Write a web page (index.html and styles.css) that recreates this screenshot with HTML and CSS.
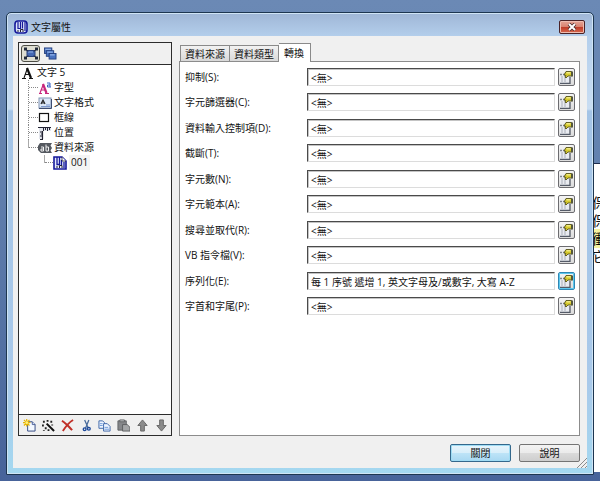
FILE: index.html
```html
<!DOCTYPE html>
<html lang="zh-Hant">
<head>
    <meta charset="UTF-8">
    <title>文字屬性</title>
    <link rel="stylesheet" href="styles.css">
</head>
<body>
<!-- shared icons -->
<svg class="sprite" aria-hidden="true">
    <symbol id="i-app" viewBox="0 0 14 14">
        <rect x="1" y="1" width="12" height="12" rx="3" fill="#dfe5fb" stroke="#15189a" stroke-width="1.600"/>
        <path d="M4 2v6.500h2.500V2M8.500 2v6.500M11 2v9" fill="none" stroke="#15189a" stroke-width="1.200"/>
        <path d="M3 11h2M6.500 12V9.500h2.500V12" fill="none" stroke="#223" stroke-width="1"/>
    </symbol>
    <symbol id="i-doc" viewBox="0 0 14 14">
        <path d="M1 1h8l4 4v8H1z" fill="#e6ebfd" stroke="#15189a" stroke-width="1.600"/>
        <path d="M4 1v7.500h2.500V1M8.500 4v5M11 6v6" fill="none" stroke="#15189a" stroke-width="1.300"/>
        <path d="M9 1v4h4" fill="#fff" stroke="#223" stroke-width=".8"/>
        <path d="M3 11h2M6.500 12V9.500H9V12" fill="none" stroke="#223"/>
    </symbol>
    <symbol id="i-prop" viewBox="0 0 15 15">
        <path d="M1 4h9v9H1z" fill="#e9ebf0"/>
        <path d="M1 4.500h5" stroke="#7f848e" stroke-width="1.400" stroke-dasharray="2 1"/>
        <path d="M2 7h6M2 9h6M2 11h6" stroke="#a8adb8" stroke-dasharray="2 1"/>
        <path d="M1 13.300h10V7" fill="none" stroke="#555b68" stroke-width="1.300"/>
        <path d="M5 5l2-3.500h5.500v4.500H9L7 8 6 7l1-1.500z" fill="#d6ca2c" stroke="#55511c" stroke-width=".9"/>
        <path d="M7.500 2.800h4" stroke="#f8f29a" stroke-width="1.200"/>
        <path d="M12 1.500h2v5h-2z" fill="#55573c"/>
    </symbol>
</svg>

<div class="page-behind" aria-hidden="true">保<br>保<br><mark>衝</mark><br>它</div>

<div class="dialog" role="dialog" aria-labelledby="title">
    <div class="titlebar">
        <svg class="icon"><use href="#i-app"/></svg>
        <h1 id="title">文字屬性</h1>
        <button class="close" type="button" aria-label="關閉視窗">
            <svg viewBox="0 0 10 8"><path d="M2 1l6 6M8 1L2 7" stroke="#4b2a2a" stroke-width="3.600"/><path d="M2 1l6 6M8 1L2 7" stroke="#fff" stroke-width="2"/></svg>
        </button>
    </div>

    <div class="client">
        <div class="columns">
            <div class="side">
                <div class="side-top">
                    <button class="mode active" type="button" aria-label="物件">
                        <svg viewBox="0 0 14 12"><rect x="3" y="3" width="8" height="6" fill="#4468b4" stroke="#28407c"/><path d="M4 4.500h5" stroke="#8fb0e8"/><path d="M1 1l3 3M13 1l-3 3M1 11l3-3M13 11l-3-3" stroke="#222"/><path d="M0 0h3v3H0zM11 0h3v3h-3zM0 9h3v3H0zM11 9h3v3h-3z" fill="#222b3c"/></svg>
                    </button>
                    <button class="mode" type="button" aria-label="圖層">
                        <svg viewBox="0 0 14 14"><g fill="#4a73c0" stroke="#1f3a7a" stroke-width=".9"><rect x="1" y="1" width="8" height="6"/><rect x="3" y="4" width="8" height="6"/><rect x="6" y="7" width="7.500" height="6"/></g><path d="M2 2.500h6M4 5.500h6M7 8.500h5" stroke="#a9c6f4"/></svg>
                    </button>
                </div>
                <ul class="tree">
                    <li>
                        <div class="node root">
                            <svg viewBox="0 0 14 14" class="icon"><path d="M6.500 2L3 12M4 8.500h5" fill="none" stroke="#111" stroke-width="1.100"/><path d="M6 2l4 10" stroke="#111" stroke-width="2.200"/><path d="M1 12.500h4M8 12.500h4" stroke="#111"/></svg>
                            <span>文字 5</span>
                        </div>
                        <ul>
                            <li><div class="node">
                                <svg viewBox="0 0 14 14" class="icon"><path d="M5.500 3L2 12M3 9h4" fill="none" stroke="#c8267c" stroke-width="1.200"/><path d="M5 3l3.500 9" stroke="#c8267c" stroke-width="2.200"/><path d="M1 12.500h3M7 12.500h4" stroke="#c8267c"/><path d="M9 2h3v4M12 4H9.500v2H13" fill="none" stroke="#3b64c4"/></svg>
                                <span>字型</span></div></li>
                            <li><div class="node">
                                <svg viewBox="0 0 14 14" class="icon"><rect x="1" y="2" width="12" height="10" fill="#dce8f8" stroke="#8496b4"/><path d="M1 12.500h12.500V3" fill="none" stroke="#3d4c70"/><path d="M3 8l2-4 2 4M4 7h2" fill="none" stroke="#222" stroke-width="1.200"/><path d="M8 9h4M3 10.500h9" stroke="#7c98cc"/></svg>
                                <span>文字格式</span></div></li>
                            <li><div class="node">
                                <svg viewBox="0 0 14 14" class="icon"><rect x="1.500" y="2.500" width="9" height="8" fill="#fff" stroke="#111" stroke-width="1.200"/></svg>
                                <span>框線</span></div></li>
                            <li><div class="node">
                                <svg viewBox="0 0 14 14" class="icon"><path d="M1 1h12v4H5v8H1z" fill="#e2e5ec"/><path d="M0 1.500h13M4.500 5v8M2 13.500h3" fill="none" stroke="#223" stroke-width="1.200"/><path d="M5.500 2v3M7.500 2v2M9.500 2v3M11.500 2v2M2 6h3M3 8h2M2 10h3" stroke="#223"/></svg>
                                <span>位置</span></div></li>
                            <li><div class="node">
                                <svg viewBox="0 0 14 14" class="icon"><path d="M0 5l2-3h12l-1.500 2.500L14 7l-1.500 2.500L14 12H3L0 9z" fill="#54585f"/><path d="M3 6h2.500v4H3V8h2.500M8 3.500V10h2.500V6H8" fill="none" stroke="#fff" stroke-width=".9"/></svg>
                                <span>資料來源</span></div>
                                <ul>
                                    <li><div class="node">
                                        <svg class="icon"><use href="#i-doc"/></svg>
                                        <span class="picked">001</span></div></li>
                                </ul>
                            </li>
                        </ul>
                    </li>
                </ul>
                <div class="side-tools">
                    <button type="button" aria-label="新增"><svg viewBox="0 0 14 14"><path d="M5 3h5l3 3v7H5z" fill="#f4f8ff" stroke="#2c4480"/><path d="M10 3v3h3" fill="#cfdcf6" stroke="#2c4480" stroke-width=".8"/><path d="M4 0v8M0 4h8M1 1l6 6M7 1L1 7" stroke="#e8b400" stroke-width="1.300"/><circle cx="4" cy="4" r="1.500" fill="#fff27a"/></svg></button>
                    <button type="button" aria-label="精靈"><svg viewBox="0 0 14 14"><path d="M5 5l8 8" stroke="#111" stroke-width="2.200"/><path d="M5 1h2v2H5zM1 2h2v2H1zM9 2h2v2H9zM0 6h2v2H0zM10 6h2v1h-2zM3 9h2v2H3zM6 11h2v2H6zM1 12h2v1H1z" fill="#222"/></svg></button>
                    <button type="button" aria-label="刪除"><svg viewBox="0 0 14 14"><path d="M1 2c4 2 7 6 11 10" fill="none" stroke="#c03028" stroke-width="2.200"/><path d="M13 1C8 4 5 8 2 13" fill="none" stroke="#c03028" stroke-width="2"/></svg></button>
                    <button type="button" aria-label="剪下"><svg viewBox="0 0 14 14"><path d="M5 1l4 9M9.500 1L6 10" stroke="#4a6c9c" stroke-width="1.400"/><g fill="none" stroke="#1f4b9c" stroke-width="1.500"><circle cx="5" cy="11" r="1.500"/><circle cx="9.500" cy="10.500" r="1.500"/></g></svg></button>
                    <button type="button" aria-label="複製"><svg viewBox="0 0 14 14"><g fill="#eef4ff" stroke="#3a64a8"><path d="M1 2h4l2 2v6H1z"/><path d="M6 5h4l3 3v5H6z"/></g><path d="M2 5h3M2 7h3M7 9h4M7 11h5" stroke="#6c98d8"/></svg></button>
                    <button type="button" aria-label="貼上"><svg viewBox="0 0 14 14"><path d="M1 2h9v10H1z" fill="#85878a" stroke="#606265"/><path d="M3 1h5v2H3z" fill="#c6c8ca" stroke="#606265"/><path d="M6 6h5l3 3v4H6z" fill="#a4a6a8" stroke="#5c5e60"/></svg></button>
                    <button type="button" aria-label="上移"><svg viewBox="0 0 14 14"><path d="M7 1l5 6H9v6H5V7H2z" fill="#8b8b8b" stroke="#646464"/></svg></button>
                    <button type="button" aria-label="下移"><svg viewBox="0 0 14 14"><path d="M7 13l5-6H9V1H5v6H2z" fill="#8b8b8b" stroke="#646464"/></svg></button>
                </div>
            </div>

            <div class="main">
                <div class="tabs" role="tablist">
                    <button type="button" role="tab">資料來源</button>
                    <button type="button" role="tab">資料類型</button>
                    <button type="button" role="tab" class="current" aria-selected="true">轉換</button>
                </div>
                <form class="panel">
                    <div class="row"><label for="f1">抑制(S):</label><input id="f1" type="text" value="&lt;無&gt;" readonly><button type="button" aria-label="編輯"><svg><use href="#i-prop"/></svg></button></div>
                    <div class="row"><label for="f2">字元篩選器(C):</label><input id="f2" type="text" value="&lt;無&gt;" readonly><button type="button" aria-label="編輯"><svg><use href="#i-prop"/></svg></button></div>
                    <div class="row"><label for="f3">資料輸入控制項(D):</label><input id="f3" type="text" value="&lt;無&gt;" readonly><button type="button" aria-label="編輯"><svg><use href="#i-prop"/></svg></button></div>
                    <div class="row"><label for="f4">截斷(T):</label><input id="f4" type="text" value="&lt;無&gt;" readonly><button type="button" aria-label="編輯"><svg><use href="#i-prop"/></svg></button></div>
                    <div class="row"><label for="f5">字元數(N):</label><input id="f5" type="text" value="&lt;無&gt;" readonly><button type="button" aria-label="編輯"><svg><use href="#i-prop"/></svg></button></div>
                    <div class="row"><label for="f6">字元範本(A):</label><input id="f6" type="text" value="&lt;無&gt;" readonly><button type="button" aria-label="編輯"><svg><use href="#i-prop"/></svg></button></div>
                    <div class="row"><label for="f7">搜尋並取代(R):</label><input id="f7" type="text" value="&lt;無&gt;" readonly><button type="button" aria-label="編輯"><svg><use href="#i-prop"/></svg></button></div>
                    <div class="row"><label for="f8">VB 指令檔(V):</label><input id="f8" type="text" value="&lt;無&gt;" readonly><button type="button" aria-label="編輯"><svg><use href="#i-prop"/></svg></button></div>
                    <div class="row"><label for="f9">序列化(E):</label><input id="f9" type="text" value="每 1 序號 遞增 1, 英文字母及/或數字, 大寫 A-Z" readonly><button type="button" class="hot" aria-label="編輯"><svg><use href="#i-prop"/></svg></button></div>
                    <div class="row"><label for="f10">字首和字尾(P):</label><input id="f10" type="text" value="&lt;無&gt;" readonly><button type="button" aria-label="編輯"><svg><use href="#i-prop"/></svg></button></div>
                </form>
            </div>
        </div>

        <div class="footer">
            <button type="button" class="default">關閉</button>
            <button type="button">說明</button>
        </div>
        <svg class="grip" viewBox="0 0 10 10"><path d="M0 10L10 0M4 10l6-6M8 10l2-2" stroke="#8c8c8c"/></svg>
    </div>
</div>
</body>
</html>
```

FILE: styles.css
```css
*{
    margin:0;
    padding:0;
    box-sizing:border-box;
}
body{
    position:relative;
    display:flex;
    min-height:100vh;
    padding:12px 6px 6px;
    font:10px/15px "Open Sans","Noto Sans CJK TC",sans-serif;
    color:#111;
    background:linear-gradient(#6b89b5,#6483b0 30%,#47639a);
}
ul{
    list-style:none;
}
button,input{
    font:inherit;
    color:inherit;
}
svg{
    display:block;
}
.sprite{
    position:absolute;
    width:0;
    height:0;
}
.icon{
    flex:none;
    width:14px;
    height:14px;
}

/* document window that shows past the right edge */
.page-behind{
    position:absolute;
    top:163px;
    right:0;
    bottom:9px;
    width:8px;
    padding-top:30px;
    overflow:hidden;
    border-top:1px solid #1c2c4c;
    background:#fff;
    font-size:14px;
    line-height:18px;
    white-space:nowrap;
}
.page-behind mark{
    background:#f6f3a0;
}

.dialog{
    position:relative;
    flex:1;
    display:flex;
    flex-direction:column;
    padding:0 6px 6px;
    border:1px solid #1d3650;
    border-radius:5px 5px 1px 1px;
    background:linear-gradient(#9fb6d6,#b4cfec 24px,#c9ddf2 96px,#a4c4e6 98px,#a9c9ea 80%,#a4d8f0);
    box-shadow:inset 0 0 0 1px #cfe4f5;
}
.titlebar{
    display:flex;
    align-items:center;
    height:23px;
    padding:5px 2px 0 1px;
}
.titlebar h1{
    flex:1;
    margin-left:3px;
    font-size:10px;
    font-weight:normal;
}
.close{
    display:flex;
    align-items:center;
    justify-content:center;
    width:26px;
    height:14px;
    border:1px solid #4a2226;
    border-radius:2px;
    background:linear-gradient(#e5a596,#d98270 48%,#bf3c28 52%,#d6694f);
    box-shadow:inset 0 0 0 1px #eebcb0;
}
.close svg{
    width:10px;
    height:8px;
}

.client{
    position:relative;
    flex:1;
    display:flex;
    flex-direction:column;
    padding:6px 7px 6px 5px;
    background:#f0f0f0;
}
.columns{
    flex:1;
    display:flex;
    gap:7px;
}

/* left side */
.side{
    flex:none;
    display:flex;
    flex-direction:column;
    width:154px;
    border:1px solid #2c2c2c;
}
.side-top{
    display:flex;
    align-items:center;
    height:22px;
    padding-left:2px;
    border-bottom:1px solid #2c2c2c;
}
.mode{
    display:flex;
    align-items:center;
    justify-content:center;
    width:19px;
    height:17px;
    border:1px solid transparent;
    border-radius:3px;
    background:none;
}
.mode.active{
    border-color:#4c4c44;
    background:#deded2;
}
.mode svg{
    width:14px;
    height:13px;
}
.tree{
    flex:1;
    padding:0 0 0 2px;
    background:#fff;
}
.tree ul{
    margin-left:7px;
}
.tree ul ul{
    margin-left:15px;
}
.node{
    display:flex;
    align-items:center;
    height:15px;
}
.node span{
    margin-left:2px;
}
.node .picked{
    padding:0 2px;
    background:#f4f4f4;
}
.tree ul .node:before{
    content:'';
    width:9px;
    border-top:1px dotted #888;
}
.tree ul ul .node:before{
    width:8px;
}
.tree ul>li{
    border-left:1px dotted #888;
}
/* last branch: the line stops at the node */
.tree ul>li:last-child{
    border-left:0;
    padding-left:1px;
    background:linear-gradient(#aaa,#aaa) 0 0/1px 8px no-repeat;
}
.side-tools{
    display:flex;
    align-items:center;
    height:21px;
    padding-left:1px;
    border-top:1px solid #2c2c2c;
}
.side-tools button{
    display:flex;
    align-items:center;
    justify-content:center;
    width:19px;
    height:18px;
    border:0;
    background:none;
}
.side-tools svg{
    width:13px;
    height:13px;
}

/* right side */
.main{
    flex:1;
    display:flex;
    flex-direction:column;
}
.tabs{
    display:flex;
    align-items:flex-end;
    height:19px;
    padding-left:1px;
}
.tabs button{
    height:16px;
    padding:0 4px;
    border:1px solid #8a8a8a;
    border-bottom:0;
    background:linear-gradient(#f2f2f2,#d8d8d8);
    line-height:14px;
}
.tabs button + button{
    border-left:0;
}
.tabs .current{
    position:relative;
    z-index:1;
    height:19px;
    margin-bottom:-1px;
    padding:0 6px 1px 5px;
    background:#fff;
}
.panel{
    flex:1;
    padding:6px 4px 0 5px;
    border:1px solid #8c8c8c;
    background:#fff;
}
.row{
    display:flex;
    align-items:center;
    height:18px;
    margin-bottom:8px;
}
.row:nth-child(odd){
    margin-bottom:7px;
}
.row label{
    flex:none;
    width:122px;
}
.row input{
    flex:1;
    min-width:0;
    height:18px;
    padding-left:3px;
    border:1px solid #dcdcdc;
    border-top:1px solid #4a4a4a;
    border-left:1px solid #4a4a4a;
    outline:0;
    background:#fff;
    box-shadow:inset 1px 1px #c4c4c4;
}
.row button{
    flex:none;
    display:flex;
    align-items:center;
    justify-content:center;
    width:17px;
    height:18px;
    margin-left:3px;
    border:1px solid #6c6c70;
    border-radius:2px;
    background:linear-gradient(#f4f4f4,#dcdcdc);
}
.row button.hot{
    border-color:#2f86b4;
    box-shadow:inset 0 0 0 1px #5cc8ee;
}
.row button svg{
    width:15px;
    height:15px;
}

.footer{
    display:flex;
    justify-content:flex-end;
    gap:8px;
    padding-top:8px;
}
.footer button{
    width:61px;
    height:18px;
    border:1px solid #747474;
    border-radius:2px;
    background:linear-gradient(#f3f3f3,#ebebeb 48%,#dadada 52%,#cecece);
    line-height:14px;
}
.footer .default{
    border-color:#34688c;
    background:linear-gradient(#e8f5fc,#d8eefa 48%,#bde3f7 52%,#a8d8f2);
    box-shadow:inset 0 0 0 1px #9fdcf4;
}
.grip{
    position:absolute;
    right:0;
    bottom:0;
    width:10px;
    height:10px;
}
```
